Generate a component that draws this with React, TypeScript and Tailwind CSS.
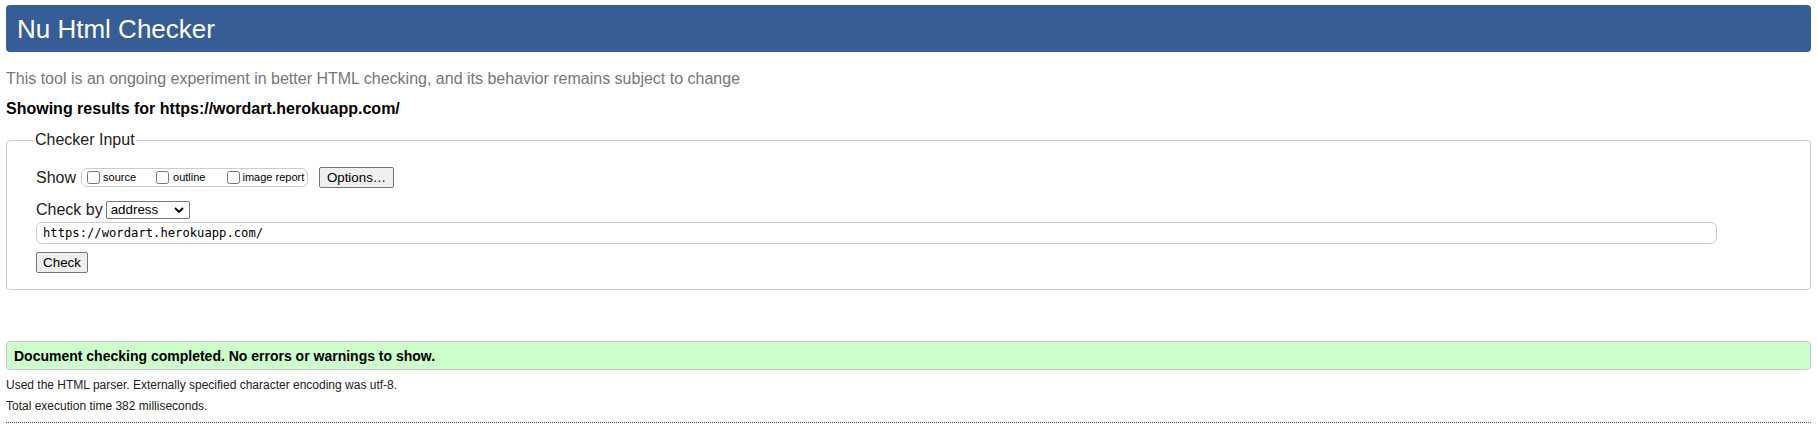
import React from "react";

export default function App() {
  const sans = { fontFamily: '"Liberation Sans", Arial, sans-serif' };
  return (
    <div className="min-h-[437px] bg-white px-[6px] pt-[5px] text-black" style={sans}>
      <header className="flex h-[47px] items-center rounded-[4px] bg-[#365d95] pl-[11px]">
        <h1 className="text-[26px] font-normal leading-none text-white">Nu Html Checker</h1>
      </header>

      <p className="mt-[18px] text-[16px] leading-[18px] text-[#777777]">
        This tool is an ongoing experiment in better HTML checking, and its behavior remains subject to change
      </p>
      <p className="mt-[12px] text-[16px] font-bold leading-[18px] text-black">
        Showing results for https://wordart.herokuapp.com/
      </p>

      <fieldset className="mt-[13px] rounded-[4px] border border-[#cccccc] pb-[16px] pl-[29px] pr-[6px]">
        <legend className="ml-[-2px] px-[1px] text-[16px] leading-[18px] text-[#222222]">Checker Input</legend>

        <div className="mt-[18px] flex h-[21px] items-center">
          <span className="text-[16px] leading-none text-[#222222]">Show</span>
          <div className="ml-[5px] flex h-[19px] w-[227px] items-center rounded-[6px] border border-[#cccccc] pl-[5px]">
            <label className="flex items-center">
              <input type="checkbox" className="m-0 h-[13px] w-[13px]" />
              <span className="ml-[3px] text-[11px] leading-none">source</span>
            </label>
            <label className="ml-[20px] flex items-center">
              <input type="checkbox" className="m-0 h-[13px] w-[13px]" />
              <span className="ml-[4px] text-[11px] leading-none">outline</span>
            </label>
            <label className="ml-[22px] flex items-center">
              <input type="checkbox" className="m-0 h-[13px] w-[13px]" />
              <span className="ml-[2px] text-[11px] leading-none">image report</span>
            </label>
          </div>
          <button className="ml-[11px] flex h-[21px] w-[75px] items-center justify-center rounded-[2px] border border-[#767676] bg-[#efefef] text-[13.33px] leading-none text-black">
            Options…
          </button>
        </div>

        <div className="mt-[13px] flex h-[18px] items-center">
          <span className="text-[16px] leading-none text-[#222222]">Check by</span>
          <div className="ml-[3px] flex h-[18px] w-[84px] items-center justify-between rounded-[2px] border border-[#767676] bg-white pl-[4px] pr-[4px]">
            <span className="text-[13.33px] leading-none text-black">address</span>
            <svg width="10" height="6" viewBox="0 0 10 6" className="mr-[1px]">
              <path d="M1 1 L5 5 L9 1" fill="none" stroke="#000" strokeWidth="1.8" />
            </svg>
          </div>
        </div>

        <div className="mt-[3px] flex h-[22px] w-[1681px] items-center rounded-[6px] border border-[#cccccc] pl-[6px]">
          <span
            className="text-[12.2px] leading-none text-black"
            style={{ fontFamily: '"DejaVu Sans Mono", "Liberation Mono", monospace' }}
          >
            https://wordart.herokuapp.com/
          </span>
        </div>

        <button className="mt-[8px] flex h-[21px] w-[52px] items-center justify-center rounded-[2px] border border-[#767676] bg-[#efefef] text-[13.33px] leading-none text-black">
          Check
        </button>
      </fieldset>

      <div className="mt-[51px] flex h-[29px] items-center rounded-[4px] border border-[#c8c8c8] bg-[#ccffcc] pl-[7px]">
        <span className="text-[14px] font-bold leading-none text-black">
          Document checking completed. No errors or warnings to show.
        </span>
      </div>

      <p className="mt-[5px] text-[12px] leading-[20px] text-[#222222]">
        Used the HTML parser. Externally specified character encoding was utf-8.
      </p>
      <p className="mt-[1px] text-[12px] leading-[20px] text-[#222222]">Total execution time 382 milliseconds.</p>

      <div className="mt-[6px] border-t border-dotted border-[#555555]" />
    </div>
  );
}
